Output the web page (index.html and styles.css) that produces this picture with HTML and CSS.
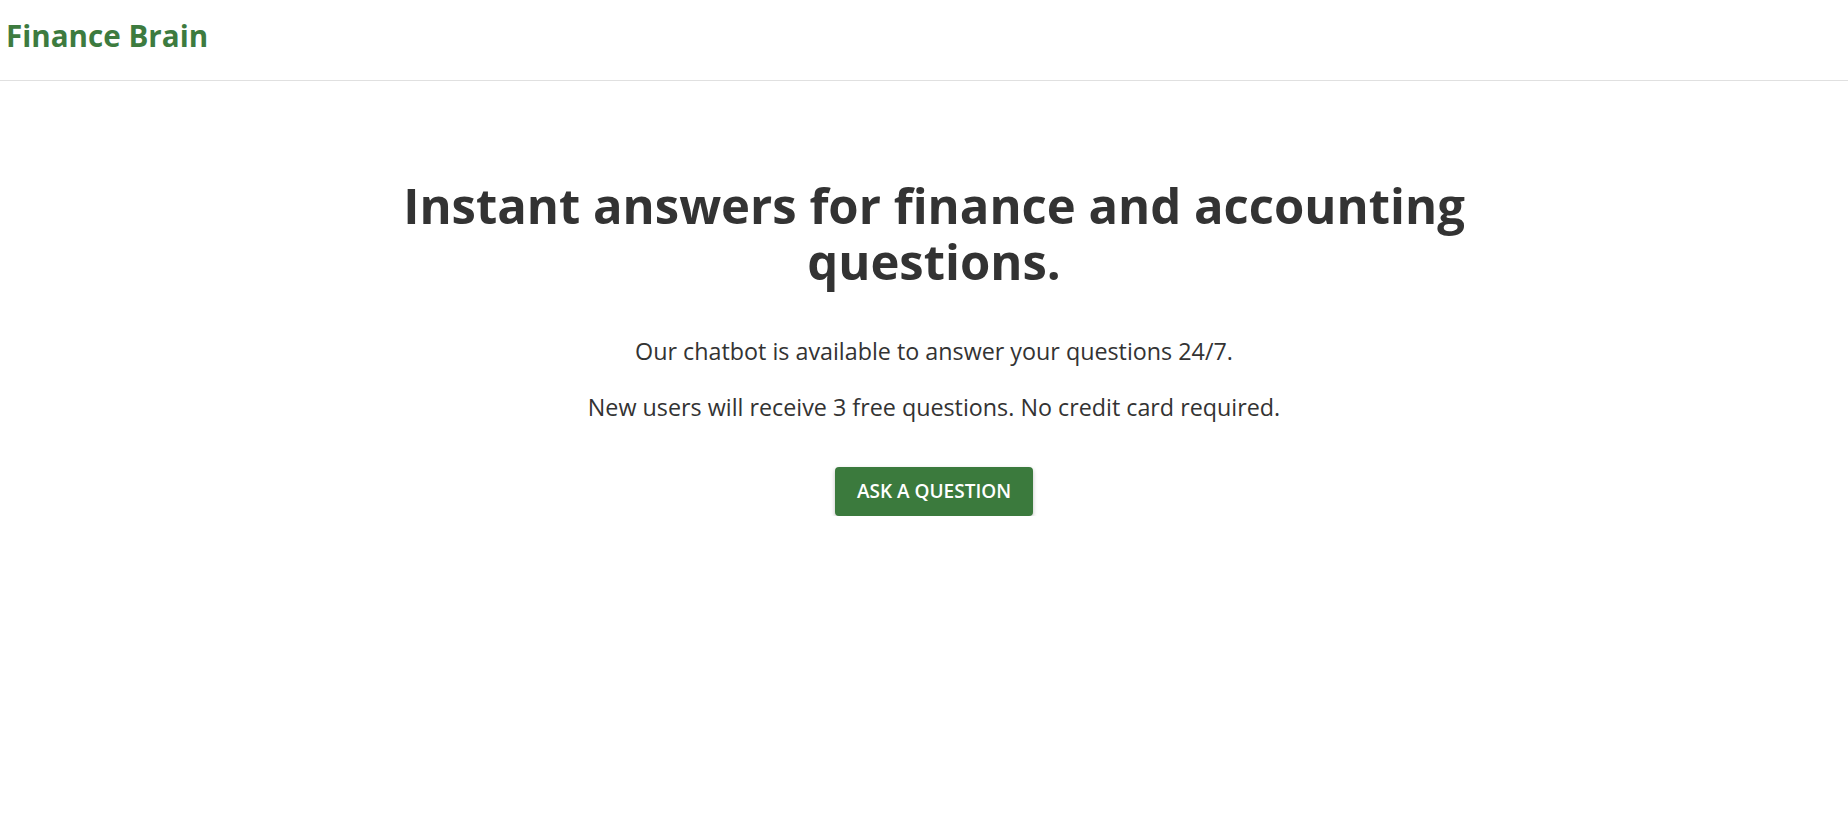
FILE: index.html
```html
<!DOCTYPE html>
<html lang="en">
<head>
<meta charset="utf-8">
<title>Finance Brain</title>
<link rel="stylesheet" href="styles.css">
</head>
<body>
<header class="site-header">
  <a class="brand" href="#">Finance Brain</a>
</header>
<main class="hero">
  <h1 class="hero-title">Instant answers for finance and accounting questions.</h1>
  <p class="hero-text hero-text-first">Our chatbot is available to answer your questions 24/7.</p>
  <p class="hero-text">New users will receive 3 free questions. No credit card required.</p>
  <a class="cta-button" href="#">Ask a question</a>
</main>
</body>
</html>
```
FILE: styles.css
```css
* { box-sizing: border-box; }

html, body {
  margin: 0;
  padding: 0;
  background: #ffffff;
}

body {
  font-family: "Open Sans", "Noto Sans", sans-serif;
  color: #333333;
}

.site-header {
  height: 81px;
  padding: 18px 6px 0;
  border-bottom: 1px solid #e0e0e0;
}

.brand {
  display: inline-block;
  font-size: 29.6px;
  font-weight: 700;
  line-height: 35px;
  color: #3d7b3f;
  text-decoration: none;
}

.hero {
  display: flex;
  flex-direction: column;
  align-items: center;
  padding: 96px 0 0 20px;
  text-align: center;
}

.hero-title {
  max-width: 1140px;
  margin: 0 0 46px;
  font-size: 49px;
  font-weight: 700;
  line-height: 56px;
  color: #333333;
}

.hero-text {
  margin: 0 0 44px;
  font-size: 23.3px;
  font-weight: 400;
  line-height: 32px;
  color: #333333;
}

.hero-text-first {
  margin-bottom: 24px;
}

.cta-button {
  display: inline-block;
  padding: 12px 21.5px;
  font-size: 19px;
  font-weight: 600;
  line-height: 25px;
  text-transform: uppercase;
  color: #ffffff;
  background: #3b7a3d;
  border-radius: 4px;
  text-decoration: none;
  box-shadow: 0 2px 4px rgba(0, 0, 0, 0.25);
}
```
